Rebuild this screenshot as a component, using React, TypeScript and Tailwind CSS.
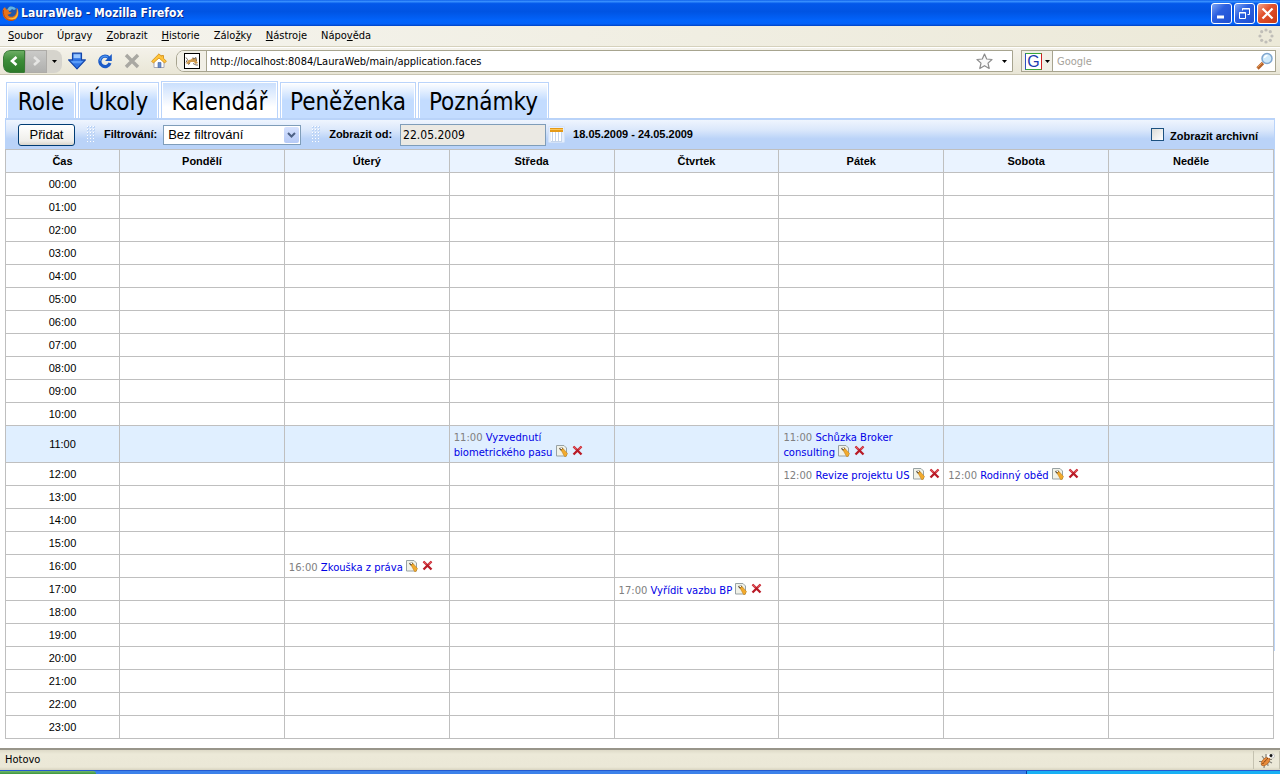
import { Fragment } from 'react';

const MENU: [string, string, string][] = [
  ['', 'S', 'oubor'],
  ['Úpr', 'a', 'vy'],
  ['', 'Z', 'obrazit'],
  ['', 'H', 'istorie'],
  ['Zálo', 'ž', 'ky'],
  ['', 'N', 'ástroje'],
  ['Nápo', 'v', 'ěda'],
];

const TABS = [
  { label: 'Role', width: 'w-[70px]' },
  { label: 'Úkoly', width: 'w-[81px]' },
  { label: 'Kalendář', width: 'w-[117px]' },
  { label: 'Peněženka', width: 'w-[136px]' },
  { label: 'Poznámky', width: 'w-[131px]' },
];

const DAYS = ['Pondělí', 'Úterý', 'Středa', 'Čtvrtek', 'Pátek', 'Sobota', 'Neděle'];

const EVENTS = [
  { day: 2, hour: 11, title: 'Vyzvednutí biometrického pasu' },
  { day: 4, hour: 11, title: 'Schůzka Broker consulting' },
  { day: 4, hour: 12, title: 'Revize projektu US' },
  { day: 5, hour: 12, title: 'Rodinný oběd' },
  { day: 1, hour: 16, title: 'Zkouška z práva' },
  { day: 3, hour: 17, title: 'Vyřídit vazbu BP' },
];

function FirefoxLogo() {
  return (
    <svg width="17" height="17" viewBox="0 0 17 17" aria-hidden="true">
      <circle cx="8.8" cy="8" r="6.8" fill="#2458a8" />
      <path d="M7 2c3-1 6 0 7 2l-2 1-2-1-2 2-3-1z" fill="#5fb4e8" />
      <path d="M1 4C.2 7 .5 11 3 13.600c3 3 8 3 11 .3 2.500-2.300 3-6 2-9-.3-1-1-2-1.600-2.400C15 5 15 9 12 11c-2.500 1.600-5.500.7-6.500-1.200L8 9l1.800-1.400L7 7 6.500 5 4 4.200 3 2z" fill="#e8731a" />
      <path d="M15 3.500c.8 3.500 0 7-2.500 8.800-2.500 1.700-6 1.200-7.500-.6 2 3.300 6.500 3.600 9 1.300 2.200-2 2.600-6 1-9.500z" fill="#fbc437" />
      <path d="M1.500 5c-.4 3 .2 6 2 8 2.500 2.600 6 3 9 1.600" fill="none" stroke="#b8420c" strokeWidth="1" />
    </svg>
  );
}

function DownloadIcon() {
  return (
    <svg width="18" height="18" viewBox="0 0 16 16" aria-hidden="true">
      <path d="M4 1h8v6h3.500L8 15 .5 7H4z" fill="#2f74e4" stroke="#1646a8" strokeLinejoin="round" />
      <path d="M5 2h6v3.500H5z" fill="#9cc8ff" />
      <path d="M2.500 8h11L11.500 10h-7z" fill="#5b9cf8" />
    </svg>
  );
}

function ReloadIcon() {
  return (
    <svg width="16" height="16" viewBox="0 0 16 16" aria-hidden="true">
      <path d="M12 5A5.200 5.200 0 1 0 13 10" fill="none" stroke="#1c5cc8" strokeWidth="3.200" />
      <path d="M14.800 1v7H8z" fill="#1c5cc8" />
      <path d="M11 4.200A5 5 0 0 0 3 8" fill="none" stroke="#4f96f0" strokeWidth="1.200" />
    </svg>
  );
}

function StopIcon() {
  return (
    <svg width="16" height="16" viewBox="0 0 16 16" aria-hidden="true">
      <path d="M2 2l12 12M14 2L2 14" stroke="#a9a8a2" strokeWidth="3.400" />
    </svg>
  );
}

function HomeIcon() {
  return (
    <svg width="16" height="16" viewBox="0 0 16 16" aria-hidden="true">
      <path d="M3 8v6.500h10V8L8 3.500z" fill="#fff" stroke="#a8a8b4" />
      <path d="M7 9.500h3v5H7z" fill="#6a8cc8" stroke="#4468a8" strokeWidth=".6" />
      <path d="M8 .8L.6 8.200l1.800 1.800L8 5l5.600 5 1.800-1.800L12.500 5.300V2.500h-2v.8z" fill="#ffc43a" stroke="#cf8a10" strokeWidth=".8" strokeLinejoin="round" />
    </svg>
  );
}

function SiteIcon() {
  return (
    <svg width="16" height="16" viewBox="0 0 16 16" aria-hidden="true">
      <rect x=".5" y=".5" width="15" height="15" fill="#fff" stroke="#000" />
      <path d="M2 10.500l2.500-3.500L7 6.500l2-2 .5 1.500L12 5l.5 3 1.500 2-2.500 1-1.500-2H7l-2.500 2z" fill="#cf9a4e" />
      <path d="M2 4.500l1.500 2L2 9.500M9 4.500l.5 1.500L12 4.500l.5 3.500M4 11.500l2-1.200M9 10.500l3 1.500h2" fill="none" stroke="#55483a" strokeWidth=".8" />
    </svg>
  );
}

function BugIcon() {
  return (
    <svg width="17" height="17" viewBox="0 0 17 17" aria-hidden="true">
      <path d="M1 9.500h4M3 13l3-1M6 16l.500-4M4 4l3 4M8 2v4M10 14l-.500-4M14 11l-4-2M14 7.500h-3" stroke="#86847c" strokeWidth="1.200" />
      <ellipse cx="7.500" cy="9.500" rx="5.200" ry="3" transform="rotate(-45 7.500 9.500)" fill="#e88a3a" stroke="#b0601f" strokeWidth=".7" />
      <path d="M4.500 12l6-6.500" stroke="#5f3010" strokeWidth="1" strokeDasharray="2 1" />
      <circle cx="11" cy="4" r="2" fill="#fff" />
      <circle cx="14.500" cy="4" r="2" fill="#fff" stroke="#999" strokeWidth=".5" />
      <circle cx="13" cy="3.500" r="1.500" fill="#151515" />
    </svg>
  );
}

function CalendarIcon() {
  return (
    <svg width="17" height="17" viewBox="0 0 17 17" aria-hidden="true">
      <rect x=".5" y=".5" width="16" height="16" rx="1" fill="#e6effc" stroke="#d3e2f8" />
      <rect x="3" y="6" width="11" height="9" fill="#fff" />
      <path d="M4.500 6v9M7.500 6v9M10.500 6v9M13.500 6v9M3 15.500h11" stroke="#c6d5ea" />
      <rect x="2" y="2" width="13" height="4" fill="#e59a16" />
      <path d="M2 3.500h13" stroke="#fbc65a" />
    </svg>
  );
}

function EditIcon() {
  return (
    <svg width="12" height="12" viewBox="0 0 12 12" className="block" aria-hidden="true">
      <path d="M.5.5H8L10.500 3v8H.5z" fill="#f1f2e8" stroke="#98a2a4" />
      <path d="M3 3l3.500-.5L8 5 6.500 6.500 4 5z" fill="#5c5340" />
      <path d="M5 5l2-1.500 4.500 5L10 11.500H8.500z" fill="#f2aa2c" stroke="#b77a1a" strokeWidth=".5" />
      <path d="M4.500 3.500h1.500" stroke="#fff" />
    </svg>
  );
}

function DeleteIcon() {
  return (
    <svg width="11" height="11" viewBox="0 0 11 11" className="block" aria-hidden="true">
      <path d="M1.500 1.500l8 8M9.500 1.500l-8 8" stroke="#b81a26" strokeWidth="2.300" />
      <path d="M1.500 1.500l3 3M9.500 1.500l-3 3" stroke="#e4545a" strokeWidth="1.200" />
    </svg>
  );
}

function Grip() {
  return (
    <svg width="9" height="17" viewBox="0 0 9 17" aria-hidden="true">
      {[0, 3, 6].map((x) =>
        [0, 3, 6, 9, 12, 15].map((y) => (
          <Fragment key={`${x}-${y}`}>
            <rect x={x} y={y} width="2" height="2" fill="#bcd4f6" />
            <rect x={x} y={y} width="1" height="1" fill="#fff" />
          </Fragment>
        )),
      )}
    </svg>
  );
}

function Caret() {
  return (
    <svg width="5" height="3" viewBox="0 0 5 3" aria-hidden="true">
      <path d="M0 0h5L2.500 3z" fill="#000" />
    </svg>
  );
}

function TitleBar() {
  const button =
    'flex size-[21px] items-center justify-center rounded-[3px] border border-white';
  return (
    <header className="flex h-[26px] shrink-0 items-center bg-[linear-gradient(#0a5be8_0%,#3a92ff_5%,#0358ea_14%,#0054e3_45%,#0264fc_80%,#0462f8_92%,#0041c2_100%)] pr-[2px] pl-[2px]">
      <FirefoxLogo />
      <h1 className="flex-1 pl-[2px] font-['DejaVu_Sans_Condensed','DejaVu_Sans',sans-serif] text-[12px] font-bold text-white [text-shadow:1px_1px_0_#0a2a88]">
        LauraWeb - Mozilla Firefox
      </h1>
      <div className="flex gap-[2px]">
        <button aria-label="Minimalizovat" className={`${button} bg-[linear-gradient(135deg,#7fa6f4,#2c60e0_40%,#1f4fd0)]`}>
          <svg width="13" height="13" aria-hidden="true"><path d="M2 10h7" stroke="#fff" strokeWidth="3" /></svg>
        </button>
        <button aria-label="Obnovit" className={`${button} bg-[linear-gradient(135deg,#7fa6f4,#2c60e0_40%,#1f4fd0)]`}>
          <svg width="13" height="13" fill="none" stroke="#fff" aria-hidden="true">
            <path d="M4.500 3.500v-2h7v6h-2M4 2h8M1.500 5.500h6v6h-6zM1 6h7" />
          </svg>
        </button>
        <button aria-label="Zavřít" className={`${button} bg-[linear-gradient(135deg,#f0a48c,#e2522e_40%,#c83a14)]`}>
          <svg width="13" height="13" aria-hidden="true"><path d="M1.500 1.500l10 10M11.500 1.500l-10 10" stroke="#fff" strokeWidth="2.200" /></svg>
        </button>
      </div>
    </header>
  );
}

function MenuBar() {
  return (
    <nav className="flex h-[21px] shrink-0 items-center border-b border-[#d5d1bc] bg-[linear-gradient(90deg,#f5f4ee,#ece9d8)] pr-[6px] pl-[8px] text-[11px]">
      <div className="flex flex-1 gap-[14px]">
        {MENU.map(([before, key, after]) => (
          <button key={key + after} className="leading-[16px]">
            {before}<span className="underline">{key}</span>{after}
          </button>
        ))}
      </div>
      <svg width="16" height="16" viewBox="0 0 16 16" fill="#c0beb8" aria-hidden="true">
        <circle cx="8" cy="2" r="1.600" /><circle cx="12.300" cy="3.700" r="1.600" />
        <circle cx="14" cy="8" r="1.600" /><circle cx="12.300" cy="12.300" r="1.600" />
        <circle cx="8" cy="14" r="1.600" /><circle cx="3.700" cy="12.300" r="1.600" />
        <circle cx="2" cy="8" r="1.600" /><circle cx="3.700" cy="3.700" r="1.600" />
      </svg>
    </nav>
  );
}

function NavigationBar() {
  return (
    <div className="flex h-[28px] shrink-0 items-center border-t border-b border-t-white border-b-[#c9c5b2] bg-[linear-gradient(#f4f2ea,#e9e6d6)] pr-[4px] pl-[3px] text-[11px]">
      <div className="flex h-[23px] overflow-hidden rounded-l-[7px] rounded-r-[8px] bg-[#d6d4cd]">
        <button aria-label="Zpět" className="flex w-[22px] items-center justify-center rounded-l-[7px] border border-[#3a7a38] bg-[linear-gradient(#6cae64,#3c8c38_45%,#2c7a2a)]">
          <svg width="12" height="12" aria-hidden="true"><path d="M8.500 2L4 6l4.500 4" fill="none" stroke="#fff" strokeWidth="2.600" /></svg>
        </button>
        <button aria-label="Vpřed" className="flex w-[22px] items-center justify-center border border-[#aeaca8] bg-[linear-gradient(#cacac8,#b0b0ae)]">
          <svg width="12" height="12" aria-hidden="true"><path d="M4 2l4.500 4L4 10" fill="none" stroke="#e6e6e4" strokeWidth="2.600" /></svg>
        </button>
        <button aria-label="Historie stránek" className="flex w-[15px] items-center justify-center"><Caret /></button>
      </div>
      <div className="flex items-center gap-[11px] pr-[9px] pl-[6px]">
        <button aria-label="Stahování"><DownloadIcon /></button>
        <button aria-label="Obnovit stránku"><ReloadIcon /></button>
        <button aria-label="Zastavit"><StopIcon /></button>
        <button aria-label="Domů"><HomeIcon /></button>
      </div>
      <div className="flex h-[22px] flex-1 items-center rounded-l-[8px] border border-[#a7a48f] bg-white">
        <span className="flex h-full w-[30px] items-center justify-center rounded-l-[7px] border-r border-[#a7a48f] bg-[#f1efe6]">
          <SiteIcon />
        </span>
        <input aria-label="Adresa" defaultValue="http://localhost:8084/LauraWeb/main/application.faces" className="h-full min-w-0 flex-1 pl-[3px] outline-none" />
        <svg width="17" height="17" viewBox="0 0 17 17" aria-hidden="true">
          <path d="M8.500 1l2.200 5 5.300.5-4 3.600 1.200 5.400-4.700-2.800-4.700 2.800L5 10.100 1 6.500 6.300 6z" fill="#fafafa" stroke="#8c8c8c" strokeWidth="1.200" strokeLinejoin="round" />
        </svg>
        <button aria-label="Nabídka adres" className="mr-[5px] ml-[9px]"><Caret /></button>
      </div>
      <div className="ml-[8px] flex h-[22px] w-[255px] items-center border border-[#a7a48f] bg-white">
        <button aria-label="Vyhledávač" className="flex h-full w-[31px] items-center gap-[3px] border-r border-[#a7a48f] bg-[#f1efe6] pl-[3px]">
          <span className="flex size-[17px] items-center justify-center border border-t-[#3aa83a] border-r-[#d02020] border-b-[#3aa83a] border-l-[#2c50c0] bg-white font-['Liberation_Sans',sans-serif] text-[16px] leading-[15px] text-[#1c3cae]">G</span>
          <Caret />
        </button>
        <input aria-label="Hledat" placeholder="Google" className="h-full min-w-0 flex-1 pl-[4px] outline-none placeholder:text-[#a5a29a]" />
        <button aria-label="Spustit hledání" className="mr-[1px]">
          <svg width="18" height="18" viewBox="0 0 18 18" aria-hidden="true">
            <path d="M1.500 16.500L7 11" stroke="#b5622a" strokeWidth="3.200" />
            <path d="M1.500 15.500L6 11" stroke="#e69a52" strokeWidth="1" />
            <circle cx="11" cy="6.500" r="5" fill="#cfeafb" stroke="#7fa6cf" strokeWidth="1.500" />
            <path d="M8.500 6a3 3 0 0 1 3-2.500" fill="none" stroke="#fff" strokeWidth="1.500" />
          </svg>
        </button>
      </div>
    </div>
  );
}

function Tabs() {
  return (
    <div role="tablist" className="flex h-[37px] items-end gap-[2px] pl-px font-['DejaVu_Sans_Condensed','DejaVu_Sans',sans-serif] text-[24px]">
      {TABS.map(({ label, width }) => {
        const active = label === 'Kalendář';
        return (
          <button
            key={label}
            role="tab"
            aria-selected={active}
            className={`${width} flex items-center justify-center border border-b-0 border-[#bad4fb] pt-[3px] shadow-[inset_1px_1px_0_#fff,inset_-1px_0_0_#fff] ${
              active ? 'h-[37px] bg-[linear-gradient(#c8defd,#fff_70%)]' : 'h-[36px] bg-[linear-gradient(#fdfeff,#c3dcff_50%)]'
            }`}
          >
            {label}
          </button>
        );
      })}
    </div>
  );
}

function Toolbar() {
  return (
    <div className="flex h-[31px] items-center border-t-2 border-r border-l border-[#b9d3f9] bg-[linear-gradient(#eff5fe,#dae7fb_35%,#bad3f8_65%)] pr-[16px] pl-[12px] text-[11px] font-bold">
      <button className="h-[22px] w-[57px] rounded-[3px] border border-[#003c74] bg-[linear-gradient(#fff,#efeeea_80%,#d9d5cb)] text-[13px] font-normal">
        Přidat
      </button>
      <span className="ml-[12px]"><Grip /></span>
      <label htmlFor="filter" className="ml-[8px]">Filtrování:</label>
      <span className="relative ml-[6px] flex">
        <select id="filter" className="h-[20px] w-[138px] appearance-none border border-[#7f9db9] bg-white pl-[4px] text-[13px] leading-[18px] font-normal">
          <option>Bez filtrování</option>
        </select>
        <span className="pointer-events-none absolute top-[2px] right-[2px] flex h-[16px] w-[15px] items-center justify-center rounded-[2px] bg-[linear-gradient(#d6e2fe,#b6caf6)]">
          <svg width="9" height="6" aria-hidden="true"><path d="M1 1l3.500 3.500L8 1" fill="none" stroke="#4d6185" strokeWidth="2" /></svg>
        </span>
      </span>
      <span className="ml-[11px]"><Grip /></span>
      <label htmlFor="from" className="ml-[8px]">Zobrazit od:</label>
      <input id="from" readOnly value="22.05.2009" className="ml-[8px] h-[22px] w-[146px] border border-[#7f9db9] bg-[#ebe9e3] pl-[2px] font-['DejaVu_Sans_Condensed','DejaVu_Sans',sans-serif] text-[12px] font-normal outline-none" />
      <button aria-label="Kalendář" className="ml-[2px]"><CalendarIcon /></button>
      <span className="ml-[8px]">18.05.2009 - 24.05.2009</span>
      <label className="ml-auto flex items-center gap-[6px]">
        <input type="checkbox" className="size-[13px] appearance-none border border-[#1c5180] bg-[linear-gradient(135deg,#dcdcd7,#fff)]" />
        <span className="pt-[4px]">Zobrazit archivní</span>
      </label>
    </div>
  );
}

function Schedule() {
  const hours = Array.from({ length: 24 }, (_, hour) => hour);
  const cell = 'border border-[#bfbfbf]';
  return (
    <table className="w-full table-fixed border-collapse bg-white text-[11px]">
      <thead>
        <tr className="h-[23px] bg-[#eaf3ff]">
          <th className={`${cell} w-[114px]`}>Čas</th>
          {DAYS.map((day) => <th key={day} className={cell}>{day}</th>)}
        </tr>
      </thead>
      <tbody>
        {hours.map((hour) => {
          const time = `${String(hour).padStart(2, '0')}:00`;
          return (
            <tr key={hour} className={hour === 11 ? 'h-[37px] bg-[#e0efff]' : 'h-[23px]'}>
              <td className={`${cell} text-center`}>{time}</td>
              {DAYS.map((day, index) => (
                <td key={day} className={`${cell} pt-[2px] pl-[4px] font-['DejaVu_Sans',sans-serif] text-[10px] leading-[14px]`}>
                  {EVENTS.filter((e) => e.day === index && e.hour === hour).map((e) => (
                    <div key={e.title}>
                      <span className="text-[#808080]">{time}</span>{' '}
                      <a href="#" className="text-[#0000e6]">{e.title}</a>{' '}
                      <span className="inline-flex h-[12px] items-center gap-[4px] align-[-1px]">
                        <button aria-label="Upravit"><EditIcon /></button>
                        <button aria-label="Smazat"><DeleteIcon /></button>
                      </span>
                    </div>
                  ))}
                </td>
              ))}
            </tr>
          );
        })}
      </tbody>
    </table>
  );
}

export default function App() {
  return (
    <div className="flex min-h-screen flex-col bg-white font-['DejaVu_Sans_Condensed','DejaVu_Sans',sans-serif] text-black">
      <TitleBar />
      <MenuBar />
      <NavigationBar />
      <main className="flex-1 px-[5px] pt-[6px] pb-[9px] font-['Liberation_Sans',sans-serif]">
        <Tabs />
        <section className="bg-[linear-gradient(#bcd6fa,#bcd6fa)] bg-[length:1px_533px] bg-right-top bg-no-repeat">
          <Toolbar />
          <div className="pr-px">
            <Schedule />
          </div>
        </section>
      </main>
      <footer className="shrink-0">
        <div className="flex h-[22px] items-center border-t-2 border-t-[#98958a] bg-[linear-gradient(#dedac8,#ece9d8_20%,#ebe8d7_85%,#d8d4c0)] pl-[5px] text-[11px]">
          <span className="flex-1">Hotovo</span>
          <span className="flex h-[18px] w-[27px] items-center justify-center border-x border-[#c5c2b0]"><BugIcon /></span>
        </div>
        <div className="flex h-[4px] border-t border-[#245ad0] bg-[#3c81ea]">
          <span className="w-[96px] rounded-tr-[3px] bg-[linear-gradient(#73b86d,#3d963c)]" />
          <span className="flex-1" />
          <span className="w-[254px] border-l border-[#0c3ca0] bg-[#18b0f4]" />
        </div>
      </footer>
    </div>
  );
}
